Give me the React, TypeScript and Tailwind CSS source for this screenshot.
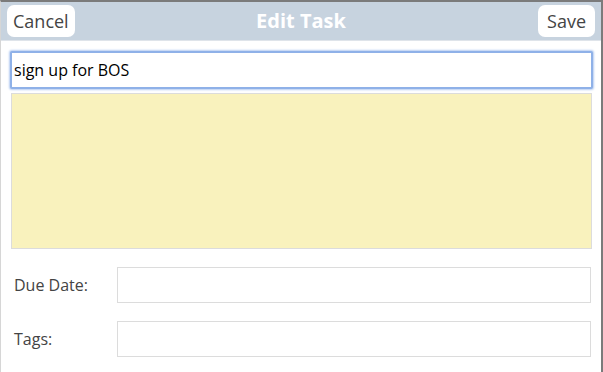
import { useState } from 'react';

const font = { fontFamily: '"Open Sans", "DejaVu Sans", sans-serif' };

export default function App() {
  const [title, setTitle] = useState('sign up for BOS');

  return (
    <div
      className="w-[603px] h-[372px] overflow-hidden bg-white border-t-2 border-r-2 border-[#7b7b7b] border-l border-l-[#d6d6d6]"
      style={font}
    >
      {/* Header bar */}
      <div className="h-[39px] bg-[#c7d3df] border-b border-b-[#dfe4ea] grid grid-cols-[1fr_auto_1fr] items-center px-[6px]">
        <div>
          <button className="h-[32px] px-[6px] bg-white rounded-[7px] text-[18px] text-[#444] leading-none">
            Cancel
          </button>
        </div>
        <div className="text-[20px] font-bold text-white leading-none">Edit Task</div>
        <div className="flex justify-end">
          <button className="h-[32px] px-[9px] bg-white rounded-[7px] text-[18px] text-[#444] leading-none">
            Save
          </button>
        </div>
      </div>

      {/* Form */}
      <div className="pl-[9px] pr-[8px] pt-[10px]">
        <input
          value={title}
          onChange={(e) => setTitle(e.target.value)}
          className="w-full h-[38px] px-[2px] bg-white border-2 border-[#8fb1e8] rounded-[2px] shadow-[0_0_2px_1px_#b7cdf2] text-[16px] text-black outline-none"
        />
        <div className="mt-[4px] ml-[1px] mr-[1px] h-[156px] bg-[#f9f2bd] border border-[#dcdcdc]" />

        <div className="mt-[18px] flex flex-col gap-[18px] pr-[2px]">
          <div className="flex items-center">
            <label className="w-[107px] pl-[4px] text-[16px] text-[#444]">Due Date:</label>
            <div className="flex-1 h-[36px] border border-[#dcdcdc]" />
          </div>
          <div className="flex items-center">
            <label className="w-[107px] pl-[4px] text-[16px] text-[#444]">Tags:</label>
            <div className="flex-1 h-[36px] border border-[#dcdcdc]" />
          </div>
        </div>
      </div>
    </div>
  );
}
